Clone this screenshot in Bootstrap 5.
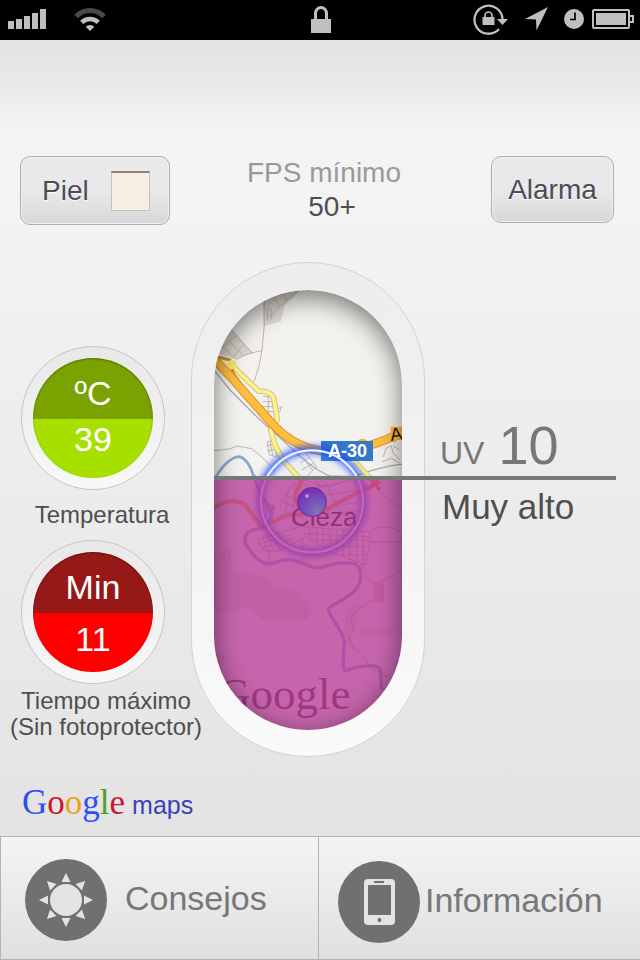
<!DOCTYPE html>
<html lang="es">
<head>
<meta charset="utf-8">
<meta name="viewport" content="width=device-width, initial-scale=1">
<title>Índice UV</title>
<link href="https://cdn.jsdelivr.net/npm/bootstrap@5.3.0/dist/css/bootstrap.min.css" rel="stylesheet">
<style>
  body { font-family: "Liberation Sans", Arial, sans-serif; color: #4f4f4f;
    background: linear-gradient(#e3e3e3 40px, #e6e6e6 70px, #f4f4f4 130px, #f3f3f3 220px, #e3e3e3 840px); }
  svg { display: block; }
  .status-bar { height: 40px; background: #000; color: #bfbfbf; padding: 0 6px 2px 8px; }
  .status-side { flex: 1 1 0; }
  .wifi { margin-left: 26px; }
  .top-row { padding: 116px 26px 0 20px; }
  .soft-btn { font-size: 28px; line-height: 34px; color: #4a4d57; border: 1px solid #adadad; border-radius: 10px;
    background: linear-gradient(#e9e9e9 50%, #d8d8d8); box-shadow: inset 0 0 0 1px #f1f1f1; text-shadow: 0 1px 1px #fff; }
  .skin-btn { width: 150px; height: 69px; padding: 0 19px 0 21px; }
  .alarm-btn { width: 123px; height: 67px; }
  .swatch { width: 39px; height: 40px; background: #f8ede3; border: 1px solid #c4c0bb; border-top: 2px solid #8b857e; }
  .spf { font-size: 28px; line-height: 34px; padding-right: 13px; }
  .spf-label { color: #999; }
  .readings { padding-top: 37px; }
  .gauges { width: 212px; padding-top: 84px; margin-right: -21px; z-index: 1; }
  .dial { width: 144px; height: 144px; margin-left: 21px; padding: 11px; border: 1px solid #c6c6c6; border-radius: 50%;
    background: linear-gradient(#e8e8e8, #f8f8f8); }
  .dial-face { height: 120px; border-radius: 50%; overflow: hidden; color: #fff; font-size: 34px; line-height: 40px; position: relative; }
  .dial-face::after { content: ""; position: absolute; inset: 0; border-radius: 50%; box-shadow: inset 0 1px 2px rgba(0,0,0,.35); }
  .dial-unit { height: 61px; padding-top: 9px; }
  .dial-value { height: 59px; }
  .temp .dial-unit { background: #7aa200; }
  .temp .dial-value { background: #a6df00; padding-bottom: 19px; }
  .time .dial-unit { background: #961917; }
  .time .dial-value { background: #f00; padding-bottom: 7px; }
  .dial-note { font-size: 24px; line-height: 26px; white-space: nowrap; }
  .temp .dial-note { padding: 12px 8px 12px 0; }
  .time .dial-note { padding-top: 4px; }
  .capsule { width: 234px; padding: 27px 22px 26px; border: 1px solid #d3d3d3; border-radius: 117px; flex: none;
    background: linear-gradient(#ededed, #f1f1f1 35%, #fafafa); }
  .map-window { height: 440px; border-radius: 94px; overflow: hidden; position: relative; background: #f4f2ee; }
  .map-window::after { content: ""; position: absolute; inset: 0; border-radius: 94px; box-shadow: inset 0 7px 26px rgba(0,0,0,.52); }
  .uv-row { height: 214px; padding: 0 0 4px 15px; color: #777; }
  .uv-tag { font-size: 32px; line-height: 32px; }
  .uv-value { font-size: 54px; line-height: 54px; margin-left: 14px; }
  .uv-level { font-size: 35px; line-height: 40px; padding: 11px 0 0 17px; }
  .uv-rule { left: 214px; right: 24px; top: 251px; height: 4px; background: #777; z-index: 2; }
  .maps-logo { height: 40px; margin: 26px 0 13px 22px; line-height: 40px; }
  .maps-word { font-family: "Liberation Serif", "Times New Roman", serif; font-size: 35px; }
  .maps-tail { font-size: 25px; color: #3a42b8; margin-left: 7px; }
  .g-blue { color: #2c4ff0; } .g-red { color: #cb1730; } .g-gold { color: #e9a21c; } .g-green { color: #4aa02a; }
  .tab-bar { height: 124px; border: solid #b4b4b4; border-width: 1px 0 1px 1px; background: linear-gradient(#f4f4f4, #e0e0e0); }
  .tab-link { font-size: 34px; line-height: 40px; color: #777; text-decoration: none; flex: 1 1 0; }
  .tab-link:first-child { padding: 3px 0 0 24px; border-right: 1px solid #b4b4b4; flex: 0 0 318px; gap: 18px; }
  .tab-link:last-child { padding: 8px 0 0 19px; gap: 5px; }
  .tab-text { padding-bottom: 4px; }
</style>
<script src="https://cdn.jsdelivr.net/npm/bootstrap@5.3.0/dist/js/bootstrap.bundle.min.js"></script>
</head>
<body class="d-flex flex-column min-vh-100">

<header class="status-bar d-flex align-items-center">
  <div class="status-side d-flex align-items-center">
    <svg width="38" height="20" fill="currentColor" aria-label="Cobertura"><path d="M0 12h6v8H0zM8 10h6v10H8zM16 7h6v13h-6zM24 4h6v16h-6zM32 0h6v20h-6z"/></svg>
    <svg class="wifi" width="36" height="26" viewBox="-18 -25 36 26" fill="none" stroke="currentColor" aria-label="Wi-Fi">
      <path d="M-14-14.500A19.500 19.500 0 0 1 14-14.500" stroke="#484848" stroke-width="5"/>
      <path d="M-8.300-8.700A12 12 0 0 1 8.300-8.700" stroke-width="4.500"/>
      <path d="M0 0L-4.300-4.300A6.200 6.200 0 0 1 4.300-4.300Z" fill="currentColor" stroke="none"/></svg>
  </div>
  <svg width="20" height="27" fill="none" stroke="currentColor" aria-label="Bloqueado"><path d="M4.500 14V7.500a5.500 6 0 0 1 11 0V14" stroke-width="3"/><path d="M0 13h20v14H0z" fill="currentColor" stroke="none"/></svg>
  <div class="status-side d-flex align-items-center justify-content-end">
    <svg width="36" height="32" fill="none" stroke="currentColor" aria-label="Rotación bloqueada">
      <path d="M29.500 16.500A14 14 0 1 0 26 26" stroke-width="2.300"/><path d="M24 16h11l-5.500 6z" fill="currentColor" stroke="none"/>
      <path d="M9.500 14h12v8h-12z" fill="currentColor" stroke="none"/><path d="M12 14v-1.500a3.500 3.500 0 0 1 7 0V14" stroke-width="1.700"/></svg>
    <svg class="ms-3" width="23" height="24" fill="currentColor" aria-label="Ubicación"><path d="M23 0L11.500 23.500 11 12.500 0 12z"/></svg>
    <svg class="ms-3" width="20" height="20" aria-label="Alarma activa"><circle cx="10" cy="10" r="10" fill="currentColor"/><path d="M11 3.500V10.500H6" fill="none" stroke="#000" stroke-width="1.700"/></svg>
    <svg class="ms-2" width="42" height="20" fill="none" stroke="currentColor" stroke-width="2" aria-label="Batería"><rect x="1" y="1" width="36" height="18" rx="1"/><path d="M4 4h30v12H4z" fill="currentColor" stroke="none"/><path d="M37 7h4v6h-4"/></svg>
  </div>
</header>

<section class="top-row d-flex align-items-start">
  <button type="button" class="soft-btn skin-btn d-flex align-items-center justify-content-between">Piel <span class="swatch"></span></button>
  <div class="spf flex-fill text-center">
    <div class="spf-label">FPS mínimo</div>
    <div class="ps-3">50+</div>
  </div>
  <button type="button" class="soft-btn alarm-btn p-0">Alarma</button>
</section>

<main class="readings d-flex position-relative">
  <div class="gauges flex-shrink-0 position-relative text-center">
    <div class="temp">
      <div class="dial"><div class="dial-face">
        <div class="dial-unit d-flex align-items-center justify-content-center">ºC</div>
        <div class="dial-value d-flex align-items-center justify-content-center">39</div>
      </div></div>
      <div class="dial-note">Temperatura</div>
    </div>
    <div class="time">
      <div class="dial"><div class="dial-face">
        <div class="dial-unit d-flex align-items-center justify-content-center">Min</div>
        <div class="dial-value d-flex align-items-center justify-content-center">11</div>
      </div></div>
      <div class="dial-note">Tiempo máximo<br>(Sin fotoprotector)</div>
    </div>
  </div>

  <div class="capsule">
    <div class="map-window">
      <svg width="100%" height="440" viewBox="0 0 188 440" aria-label="Mapa de Cieza">
        <defs>
          <radialGradient id="ball" cx=".7" cy=".85" r=".85"><stop offset="0" stop-color="#8672ba"/><stop offset=".55" stop-color="#7350b8"/><stop offset="1" stop-color="#7a2bb0"/></radialGradient>
          <filter id="glow" x="-30%" y="-30%" width="160%" height="160%"><feGaussianBlur stdDeviation="9"/></filter>
        </defs>
        <!-- north of the town -->
        <g transform="translate(-34 -40) scale(.3333)" fill="none" stroke-linejoin="round">
          <path d="M252 120H362L315 165 302 215 248 228ZM100 220L150 232 218 308 165 326 110 310Z" fill="#dcd7cf"/>
          <g stroke="#bfb4ab" stroke-width="3">
            <path d="M252 130L253 225 246 300Q240 350 222 395M360 118L310 158 262 212M280 140L300 168M262 212V176L275 180V210M262 195H275M302 128L322 150M150 235L218 310M125 250L190 318M168 258L130 290M190 285L162 318M120 285L170 328Q200 310 246 302"/>
            <path d="M100 602Q150 600 170 588Q195 592 215 596Q250 620 285 665M250 440L285 440M248 455H285M245 470H280M250 485H280M265 435V500M290 480L304 470 300 485 290 482M262 575L278 572 290 620 268 615ZM260 588L284 582M262 602L288 598M270 575L278 615M345 620L372 602 410 650 380 680M360 640L388 622M365 660L400 640M372 625L398 662M610 620L618 595 634 588 640 610 660 630M640 588L660 600M605 635L635 625 660 640"/>
          </g>
          <path d="M102 360L150 420 230 500 330 590Q400 660 450 678L520 680Q600 650 670 642" stroke="#aaa9a8" stroke-width="4"/>
          <path d="M108 680Q145 620 180 620Q208 630 222 682" stroke="#87a9d2" stroke-width="8"/>
          <path d="M155 345L235 423 Q280 425 282 450L292 508 272 540 285 585 310 632 358 685M525 635L570 685" stroke="#cdbf9e" stroke-width="17"/>
          <path d="M155 345L235 423 Q280 425 282 450L292 508 272 540 285 585 310 632 358 685M525 635L570 685" stroke="#fff57c" stroke-width="11"/>
          <path d="M102 318L150 330 160 370 188 410" stroke="#d7931d" stroke-width="9"/>
          <path d="M100 325Q150 375 200 435L280 525Q350 600 450 606Q560 602 670 545" stroke="#d4932b" stroke-width="27"/>
          <path d="M100 325Q150 375 200 435L280 525Q350 600 450 606Q560 602 670 545" stroke="#ffbe40" stroke-width="21"/>
          <circle cx="155" cy="344" r="14" fill="#fbe96d"/>
          <ellipse cx="547" cy="580" rx="18" ry="13" fill="#f9ad28"/>
          <path d="M632 530H672V570H650L646 578 632 572Z" fill="#ffbb38"/>
        </g>
        <text transform="translate(177 151) rotate(-8)" font-size="18" fill="#301000">A</text>
        <!-- town, river and south -->
        <g transform="translate(-34 150) scale(.3333)" fill="none" stroke-linejoin="round">
          <path d="M100 350L152 322 155 392 255 410 290 440 358 452 397 518 375 542H250L205 500 150 516H100ZM100 640H138L130 670H100Z" fill="#e0dfd0"/>
          <path d="M580 430H612V486H582Z" fill="#e6c6c0"/>
          <path d="M530 480L545 500 510 570 525 650 490 580Q490 520 530 480ZM540 565L668 555V578L540 592Z" fill="#e8e2da"/>
          <g stroke="#b5a29a" stroke-width="2.500">
            <path d="M300 200L340 130 380 120 430 140 520 120 550 210M310 160L350 185M300 180L345 200M325 145L315 240M345 130L338 250M380 130L400 230M410 120L450 230M440 130L480 220M370 150L480 130M440 165L540 150M450 200L550 185M460 220L545 210"/>
            <path d="M232 300L360 260 570 275V310L555 375 515 360 440 330 380 290 290 335 250 330ZM245 285L265 335M258 280L282 335M272 276L300 335M290 272L315 322M235 312L330 285M245 325L340 295M390 265V295M410 265V310M430 265V325M450 268V332M470 270V340M490 270V350M510 272V360M530 272V370M550 274V375M370 280L570 290M390 300H560M430 320H558M480 345H555"/>
            <path d="M265 372L270 330M367 360V295M545 370Q550 410 580 430M575 270Q620 250 660 275M560 305H668M668 380Q640 420 580 430M590 145Q620 175 668 210M580 480Q515 510 512 540Q530 570 508 590Q510 620 545 645Q560 655 562 680L625 710"/>
          </g>
          <path d="M100 205Q150 170 195 192L250 270M250 260L320 225 420 220 480 185 600 125M365 120L345 170 360 210" stroke="#eea94d" stroke-width="13"/>
          <path d="M565 110L600 150M600 110L565 150" stroke="#ff7755" stroke-width="9"/>
          <path d="M222 105C230 140 240 165 262 190C282 215 278 262 225 268C190 275 188 300 205 325C222 350 242 372 268 372C290 370 300 355 335 360C375 366 385 385 420 383C445 375 465 368 500 369C532 366 545 385 541 410C542 440 525 455 495 475C470 490 445 500 445 511C455 540 485 565 492 602C495 640 482 665 494 692C520 685 540 677 570 678C612 674 600 700 605 750" stroke="#8fa7d8" stroke-width="10"/>
          <path d="M255 195L285 195 278 245Z" fill="#8fa7d8"/>
        </g>
        <text x="77" y="236" font-size="26" fill="#201018">Cieza</text>
        <text x="4" y="419" font-size="45" font-family="Liberation Serif, serif" fill="#544">Google</text>
        <rect x="107" y="151" width="52" height="20" fill="#3777c9"/>
        <g transform="translate(-34 -40) scale(.3333)" fill="none">
          <circle cx="396" cy="754" r="154" fill="#9bc3ff" fill-opacity=".08"/>
          <circle cx="396" cy="754" r="155" stroke="#1744ff" stroke-width="22" filter="url(#glow)" opacity=".85"/>
          <circle cx="396" cy="754" r="153" stroke="#e8f1ff" stroke-width="7"/>
        </g>
        <text x="114" y="167" font-size="18" font-weight="700" fill="#fff">A-30</text>
        <rect y="188" width="188" height="252" fill="#b73696" fill-opacity=".75"/>
        <circle cx="98" cy="212" r="14.500" fill="url(#ball)" stroke="#6b2da6"/>
        <circle cx="93" cy="206" r="2" fill="#d283d6"/>
      </svg>
    </div>
  </div>

  <div class="flex-fill">
    <div class="uv-row d-flex align-items-end">
      <div class="d-flex align-items-baseline"><span class="uv-tag">UV</span><span class="uv-value">10</span></div>
    </div>
    <div class="uv-level">Muy alto</div>
  </div>
  <div class="uv-rule position-absolute"></div>
</main>

<div class="maps-logo d-flex align-items-baseline"><span class="maps-word"><span class="g-blue">G</span><span class="g-red">o</span><span class="g-gold">o</span><span class="g-blue">g</span><span class="g-green">l</span><span class="g-red">e</span></span><span class="maps-tail">maps</span></div>

<nav class="tab-bar d-flex mt-auto">
  <a href="#consejos" class="tab-link d-flex align-items-center">
    <svg width="82" height="82" viewBox="-41 -41 82 82" fill="#e3e3e3" aria-hidden="true">
      <circle r="41" fill="#707070"/><circle r="16"/>
      <g id="rays"><path id="ray" d="M0-27L4.500-18H-4.500Z"/><use href="#ray" transform="rotate(45)"/><use href="#ray" transform="rotate(90)"/><use href="#ray" transform="rotate(135)"/></g>
      <use href="#rays" transform="rotate(180)"/>
    </svg>
    <span class="tab-text">Consejos</span>
  </a>
  <a href="#informacion" class="tab-link d-flex align-items-center">
    <svg width="82" height="82" aria-hidden="true">
      <circle cx="41" cy="41" r="41" fill="#707070"/><rect x="26" y="18" width="31" height="46" rx="4" fill="#e3e3e3"/>
      <path d="M30 24h23v30H30zM36 20h10v2H36z" fill="#707070"/><circle cx="41.500" cy="59" r="2" fill="#707070"/>
    </svg>
    <span class="tab-text">Información</span>
  </a>
</nav>
</body>
</html>
